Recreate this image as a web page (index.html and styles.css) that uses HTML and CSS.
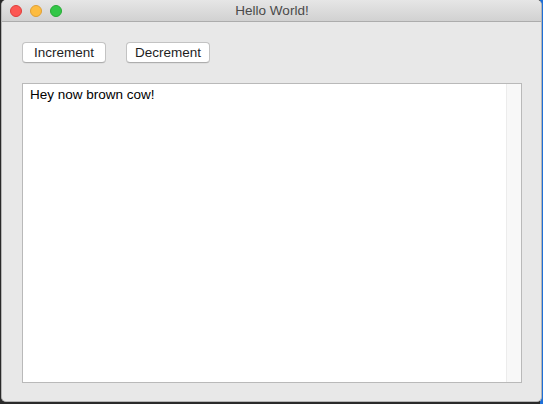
FILE: index.html
```html
<!DOCTYPE html>
<html>
<head>
<meta charset="utf-8">
<link rel="stylesheet" href="styles.css">
</head>
<body>
<div class="window">
  <div class="titlebar">
    <div class="lights">
      <span class="light red"></span>
      <span class="light yellow"></span>
      <span class="light green"></span>
    </div>
    <div class="title">Hello World!</div>
  </div>
  <div class="content">
    <div class="buttons">
      <button class="btn">Increment</button>
      <button class="btn">Decrement</button>
    </div>
    <div class="textarea">
      <div class="text">Hey now brown cow!</div>
      <div class="scrollbar"></div>
    </div>
  </div>
</div>
</body>
</html>
```

FILE: styles.css
```css
html, body {
  margin: 0;
  padding: 0;
}
body {
  width: 543px;
  height: 404px;
  background: linear-gradient(to right, #2a2a2a 0, #2a2a2a 540px, #1f6fd6 540px);
  font-family: "Liberation Sans", Arial, sans-serif;
  overflow: hidden;
}
.window {
  margin-left: 1px;
  width: 539px;
  height: 401px;
  background: #e8e8e8;
  border: 1px solid #b4b4b4;
  border-top: none;
  border-radius: 5px;
  display: flex;
  flex-direction: column;
  overflow: hidden;
}
.titlebar {
  height: 21px;
  flex: none;
  background: linear-gradient(to bottom, #e6e6e6, #d1d1d1);
  border-bottom: 1px solid #acacac;
  position: relative;
  display: flex;
  align-items: center;
  justify-content: center;
}
.lights {
  position: absolute;
  left: 8px;
  top: 5px;
  display: flex;
  gap: 8px;
}
.light {
  width: 12px;
  height: 12px;
  border-radius: 50%;
  box-sizing: border-box;
}
.red { background: #fc5753; border: 1px solid #df3d3a; }
.yellow { background: #fdbc40; border: 1px solid #de9f34; }
.green { background: #33c748; border: 1px solid #27aa35; }
.title {
  font-size: 13.5px;
  color: #4a4a4a;
  margin-left: 1px;
}
.content {
  flex: 1;
  padding: 20px 19px 18px 20px;
  display: flex;
  flex-direction: column;
}
.buttons {
  display: flex;
  gap: 20px;
  height: 21px;
}
.btn {
  width: 84px;
  height: 21px;
  padding: 0;
  margin: 0;
  background: #ffffff;
  border: 1px solid #c3c3c3;
  border-bottom-color: #adadad;
  border-radius: 4px;
  font-family: "Liberation Sans", Arial, sans-serif;
  font-size: 13.5px;
  color: #1e1e1e;
  box-shadow: 0 0.5px 0.5px rgba(0,0,0,0.08);
}
.textarea {
  margin-top: 20px;
  flex: 1;
  background: #ffffff;
  border: 1px solid #b9b9b9;
  display: flex;
}
.text {
  flex: 1;
  font-size: 13.5px;
  color: #000;
  padding: 3px 7px;
  line-height: 16px;
}
.scrollbar {
  width: 14px;
  background: #f8f8f8;
  border-left: 1px solid #ececec;
}
```
